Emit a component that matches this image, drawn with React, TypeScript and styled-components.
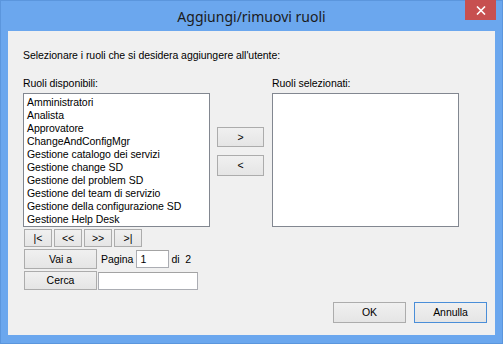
import React from "react";
import styled, { createGlobalStyle } from "styled-components";

const GlobalStyle = createGlobalStyle`
  html, body {
    margin: 0;
    padding: 0;
    background: #6ba7ee;
  }
  * {
    box-sizing: border-box;
  }
`;

const Window = styled.div`
  width: 503px;
  height: 344px;
  display: flex;
  flex-direction: column;
  background: #6ba7ee;
  border: 1px solid #5b96dd;
  font-family: "Liberation Sans", Arial, sans-serif;
  font-size: 10.5px;
  letter-spacing: -0.05px;
  color: #000;
`;

const TitleBar = styled.div`
  position: relative;
  height: 30px;
  flex: none;
  display: flex;
  align-items: center;
  justify-content: center;
`;

const Title = styled.div`
  font-family: "Noto Sans", "Open Sans", sans-serif;
  font-size: 14px;
  letter-spacing: 0;
  color: #1b1b1b;
  padding-top: 1px;
`;

const CloseButton = styled.div`
  position: absolute;
  top: -1px;
  right: 6px;
  width: 31px;
  height: 20px;
  background: #c75050;
  display: flex;
  align-items: center;
  justify-content: center;
`;

const Body = styled.div`
  flex: 1;
  margin: 0 7px 8px 7px;
  background: #f0f0f0;
  display: flex;
  flex-direction: column;
  padding: 18px 8px 12px 15px;
`;

const Text = styled.div`
  line-height: 13px;
  height: 13px;
  white-space: nowrap;
`;

const MainRow = styled.div`
  display: flex;
  margin-top: 15px;
`;

const Column = styled.div<{ $gap?: number }>`
  width: 187px;
  display: flex;
  flex-direction: column;
  margin-left: ${(p) => p.$gap ?? 0}px;
`;

const ListBox = styled.div`
  margin-top: 3px;
  height: 134px;
  background: #fff;
  border: 1px solid #828790;
  padding: 2px 3px;
  overflow: hidden;
`;

const ListItem = styled.div`
  line-height: 13px;
  height: 13px;
  white-space: nowrap;
`;

const MoveColumn = styled.div`
  width: 47px;
  margin-left: 7px;
  padding-top: 50px;
  display: flex;
  flex-direction: column;
  gap: 8px;
`;

const Button = styled.div<{ $w?: number; $h?: number; $default?: boolean }>`
  width: ${(p) => (p.$w ? `${p.$w}px` : "100%")};
  height: ${(p) => p.$h ?? 20}px;
  flex: none;
  border: 1px solid ${(p) => (p.$default ? "#4a8ed8" : "#acacac")};
  background: linear-gradient(#f0f0f0, #e5e5e5);
  display: flex;
  align-items: center;
  justify-content: center;
  line-height: 11px;
  white-space: nowrap;
`;

const Pager = styled.div`
  display: flex;
  gap: 2px;
  margin: 2px 0 0 1px;
`;

const ControlRow = styled.div`
  display: flex;
  align-items: center;
  margin: 2px 0 0 1px;
`;

const Input = styled.div<{ $w: number; $ml: number }>`
  width: ${(p) => p.$w}px;
  height: 18px;
  margin-left: ${(p) => p.$ml}px;
  background: #fff;
  border: 1px solid #abadb3;
  border-top-color: #a3a3a3;
  padding: 2px 3px;
  line-height: 13px;
`;

const InlineText = styled.span<{ $ml: number }>`
  margin-left: ${(p) => p.$ml}px;
  white-space: pre;
`;

const Footer = styled.div`
  margin-top: auto;
  display: flex;
  justify-content: flex-end;
  gap: 8px;
`;

const roles = [
  "Amministratori",
  "Analista",
  "Approvatore",
  "ChangeAndConfigMgr",
  "Gestione catalogo dei servizi",
  "Gestione change SD",
  "Gestione del problem SD",
  "Gestione del team di servizio",
  "Gestione della configurazione SD",
  "Gestione Help Desk",
];

const App = () => {
  return (
    <>
      <GlobalStyle />
      <Window>
        <TitleBar>
          <Title>Aggiungi/rimuovi ruoli</Title>
          <CloseButton>
            <svg width="10" height="9" viewBox="0 0 10 9">
              <path d="M1 0.5 L9 8.5 M9 0.5 L1 8.5" stroke="#fff" strokeWidth="1.6" />
            </svg>
          </CloseButton>
        </TitleBar>
        <Body>
          <Text>Selezionare i ruoli che si desidera aggiungere all'utente:</Text>
          <MainRow>
            <Column>
              <Text>Ruoli disponibili:</Text>
              <ListBox>
                {roles.map((r) => (
                  <ListItem key={r}>{r}</ListItem>
                ))}
              </ListBox>
              <Pager>
                <Button $w={28} $h={18}>|&lt;</Button>
                <Button $w={28} $h={18}>&lt;&lt;</Button>
                <Button $w={28} $h={18}>&gt;&gt;</Button>
                <Button $w={28} $h={18}>&gt;|</Button>
              </Pager>
              <ControlRow>
                <Button $w={73} $h={20}>Vai a</Button>
                <InlineText $ml={4}>Pagina</InlineText>
                <Input $w={33} $ml={3}>1</Input>
                <InlineText $ml={2}>di  2</InlineText>
              </ControlRow>
              <ControlRow>
                <Button $w={73} $h={19}>Cerca</Button>
                <Input $w={100} $ml={1} />
              </ControlRow>
            </Column>
            <MoveColumn>
              <Button $h={20}>&gt;</Button>
              <Button $h={21}>&lt;</Button>
            </MoveColumn>
            <Column $gap={8}>
              <Text>Ruoli selezionati:</Text>
              <ListBox />
            </Column>
          </MainRow>
          <Footer>
            <Button $w={73} $h={21}>OK</Button>
            <Button $w={73} $h={21} $default>Annulla</Button>
          </Footer>
        </Body>
      </Window>
    </>
  );
};

export default App;
